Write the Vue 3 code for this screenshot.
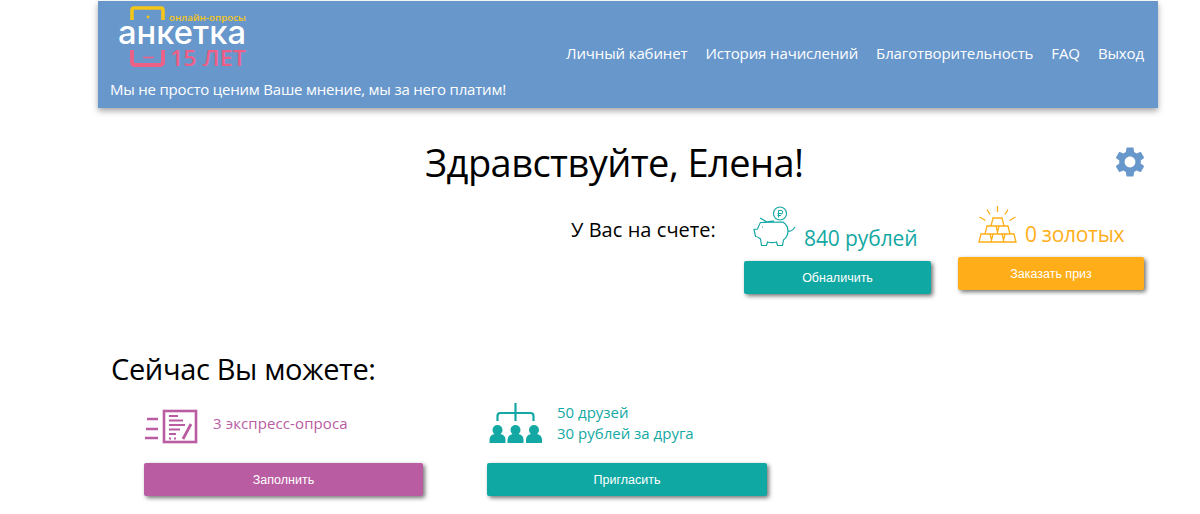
<script setup>
const navItems = ['Личный кабинет', 'История начислений', 'Благотворительность', 'FAQ', 'Выход']
</script>

<template>
  <div class="page">
    <header class="header">
      <div class="brand">
        <svg class="logo" width="140" height="72" viewBox="0 0 140 72">
          <path d="M16 20V10Q16 8 18 8H45Q47 8 47 10V20" fill="none" stroke="#f5c518" stroke-width="3.600" />
          <circle cx="32" cy="17" r="1.400" fill="#f5c518" />
          <text x="53" y="21" textLength="77" lengthAdjust="spacingAndGlyphs" class="logo-small">онлайн-опросы</text>
          <text x="2" y="44" textLength="128" lengthAdjust="spacingAndGlyphs" class="logo-main">анкетка</text>
          <path d="M16 50V62Q16 65 19 65H44Q47 65 47 62V50" fill="none" stroke="#ee5f85" stroke-width="3.800" />
          <path d="M27 57.500H38" stroke="#ee5f85" stroke-width="1.600" />
          <text x="54" y="65.500" textLength="76" lengthAdjust="spacingAndGlyphs" class="logo-years">15 ЛЕТ</text>
        </svg>
        <div class="tagline">Мы не просто ценим Ваше мнение, мы за него платим!</div>
      </div>
      <nav class="nav">
        <a v-for="item in navItems" :key="item" class="nav-link">{{ item }}</a>
      </nav>
    </header>

    <main class="main">
      <div class="title-row">
        <h1 class="title">Здравствуйте, Елена!</h1>
        <svg class="gear" width="36" height="36" viewBox="0 0 24 24">
          <path fill="#6897cc" d="M19.14,12.94c.04-.3.06-.61.06-.94 0-.32-.02-.64-.07-.94l2.03-1.58c.18-.14.23-.41.12-.61l-1.92-3.32c-.12-.22-.37-.29-.59-.22l-2.39.96c-.5-.38-1.03-.7-1.62-.94l-.36-2.54c-.04-.24-.24-.41-.48-.41h-3.84c-.24 0-.43.17-.47.41l-.36 2.54c-.59.24-1.13.57-1.62.94l-2.39-.96c-.22-.08-.47 0-.59.22L2.74 8.87c-.12.21-.08.47.12.61l2.03 1.58c-.05.3-.09.63-.09.94s.02.64.07.94l-2.03 1.58c-.18.14-.23.41-.12.61l1.92 3.32c.12.22.37.29.59.22l2.39-.96c.5.38 1.03.7 1.62.94l.36 2.54c.05.24.24.41.48.41h3.84c.24 0 .44-.17.47-.41l.36-2.54c.59-.24 1.13-.56 1.62-.94l2.39.96c.22.08.47 0 .59-.22l1.92-3.32c.12-.22.07-.47-.12-.61l-2.01-1.58zM12 15.600c-1.98 0-3.6-1.62-3.6-3.6s1.62-3.6 3.6-3.6 3.6 1.62 3.6 3.6-1.62 3.6-3.6 3.6z" />
        </svg>
      </div>

      <div class="balance-row">
        <div class="balance-label">У Вас на счете:</div>
        <div class="wallet wallet-money">
          <div class="wallet-top">
            <svg class="icon-pig" width="46" height="50" viewBox="0 0 46 50" fill="none" stroke="#13a8a3" stroke-width="1.200">
              <circle cx="30" cy="12.500" r="6.500" />
              <path d="M27.500 12.500h4M28.500 9.500v7M28.500 9.500h2.500a1.500 1.500 0 0 1 0 3.500M27.500 14.500h3.500" stroke-width="1" />
              <path d="M10 17l7 4c2-.6 4-1 7-1M33 21c3 2 5 5.500 5 9 0 4-2 7-4.500 9l-1 5.500h-5l-1-3.500c-3 .8-6 .8-9 0l-1 3.500h-5l-1-6.500c-1.500-1.500-3-2.500-5-2.500l-1.500-7 3.500-.500c1-2.500 2-5 3-6.500z" />
              <path d="M38 30c3 1 5-1 7-4" />
              <path d="M12 26h1" />
            </svg>
            <span class="amount amount-teal">840 рублей</span>
          </div>
          <button class="action action-teal wallet-btn">Обналичить</button>
        </div>
        <div class="wallet wallet-gold">
          <div class="wallet-top">
            <svg class="icon-gold" width="48" height="44" viewBox="0 0 48 44" fill="none" stroke="#ffae19" stroke-width="1.300">
              <path d="M25.500 5v6M15 8.500l3 5M36 8.500l-3 5M7.500 16l6 3.500M43.500 16l-6 3.500" />
              <path d="M21 17h9l2 8H19zM15 25h9l2 8H13zM27 25h9l2 8H25zM9 33h9l2 8H7zM21 33h9l2 8H19zM33 33h9l2 8H31z" />
            </svg>
            <span class="amount amount-gold">0 золотых</span>
          </div>
          <button class="action action-orange wallet-btn">Заказать приз</button>
        </div>
      </div>

      <h2 class="subtitle">Сейчас Вы можете:</h2>

      <div class="offers">
        <div class="offer offer-survey">
          <div class="offer-top">
            <svg class="icon-survey" width="54" height="40" viewBox="0 0 54 40" fill="none" stroke="#b95ca2">
              <rect x="19" y="5" width="32" height="31" stroke-width="2.600" />
              <path d="M2 13h11M1 23h12M0 32h13" stroke-width="2.400" />
              <path d="M24 10h9M24 14.500h14M24 19h16M24 23.500h11M24 28h7" stroke-width="1.800" />
              <path d="M24 32.500h2M29 32.500h2" stroke-width="2.200" />
              <path d="M38 33l8-15" stroke-width="2.800" />
            </svg>
            <div class="offer-text offer-text-purple">3 экспресс-опроса</div>
          </div>
          <button class="action action-purple offer-btn">Заполнить</button>
        </div>
        <div class="offer offer-friends">
          <div class="offer-top">
            <svg class="icon-friends" width="54" height="42" viewBox="0 0 54 42" fill="#13a8a3" stroke="none">
              <path d="M26.500 0v18M8.500 18v-5q0-3 3-3h30q3 0 3 3v5" fill="none" stroke="#13a8a3" stroke-width="2.200" />
              <g v-for="x in [8.5, 26.5, 45]" :key="x">
                <circle :cx="x" cy="27" r="5" />
                <path :d="`M${x - 8} 40v-3q0-5 5-6h6q5 1 5 6v3z`" />
              </g>
            </svg>
            <div class="offer-text offer-text-teal">50 друзей<br />30 рублей за друга</div>
          </div>
          <button class="action action-teal offer-btn">Пригласить</button>
        </div>
      </div>
    </main>
  </div>
</template>

<style>
html, body { margin: 0; background: #fff; }
</style>

<style scoped>
.page {
  width: 1200px;
  height: 514px;
  overflow: hidden;
  font-family: "Open Sans", "Noto Sans", sans-serif;
  color: #000;
}
.header {
  box-sizing: border-box;
  width: 1060px;
  height: 107px;
  margin: 1px 0 0 98px;
  padding-left: 12px;
  padding-right: 14px;
  background: #6897cc;
  box-shadow: 0 3px 6px rgba(0, 0, 0, 0.35);
  display: flex;
  justify-content: space-between;
  color: #fff;
}
.brand { display: flex; flex-direction: column; }
.logo { display: block; margin-left: 6px; margin-top: -1px; }
.logo-small { font: 600 9px "Open Sans", sans-serif; fill: #f5c518; }
.logo-main { font: 500 33px "Inter", sans-serif; fill: #fff; }
.logo-years { font: 600 21px "Open Sans", sans-serif; fill: #ee5f85; }
.tagline {
  margin-top: 7px;
  font-size: 15px;
  letter-spacing: -0.2px;
  line-height: 20px;
  white-space: nowrap;
}
.nav {
  display: flex;
  gap: 18px;
  margin-top: 41px;
  align-self: flex-start;
}
.nav-link {
  font-size: 15px;
  line-height: 22px;
  letter-spacing: -0.12px;
  white-space: nowrap;
}
.main { margin-left: 98px; width: 1060px; }
.title-row {
  display: flex;
  align-items: center;
  height: 50px;
  margin-top: 29px;
  padding-left: 327px;
  padding-right: 10px;
  justify-content: space-between;
}
.title {
  margin: 0;
  font-size: 38px;
  font-weight: 400;
  line-height: 50px;
  letter-spacing: -0.55px;
  white-space: nowrap;
}
.balance-row {
  display: flex;
  align-items: flex-start;
  height: 162px;
  padding-left: 473px;
}
.balance-label {
  width: 173px;
  margin-top: 30px;
  font-size: 20px;
  line-height: 26px;
  letter-spacing: 0.05px;
  white-space: nowrap;
}
.wallet { display: flex; flex-direction: column; }
.wallet-money { width: 187px; margin-top: 14px; }
.wallet-gold { width: 186px; margin-left: 27px; margin-top: 14px; }
.wallet-top { display: flex; height: 60px; }
.wallet-gold .wallet-top { height: 56px; }
.icon-pig { margin-left: 6px; flex: none; }
.icon-gold { margin-left: 14px; flex: none; }
.amount {
  font-size: 21px;
  line-height: 28px;
  white-space: nowrap;
  letter-spacing: -0.3px;
}
.amount-teal { color: #13a8a3; margin-left: 8px; margin-top: 23px; letter-spacing: -0.1px; }
.amount-gold { color: #ffae19; margin-left: 5px; margin-top: 19px; }
.action {
  display: block;
  border: none;
  border-radius: 2px;
  color: #fff;
  font-family: "Liberation Sans", Arial, sans-serif;
  font-size: 12.500px;
  padding: 0;
  box-shadow: 2px 2px 4px rgba(0, 0, 0, 0.55);
}
.wallet-btn { width: 100%; height: 33px; }
.action-teal { background: #10a8a3; }
.action-orange { background: #ffae19; }
.action-purple { background: #b95ca2; }
.subtitle {
  margin: 0 0 0 13px;
  font-size: 29px;
  font-weight: 400;
  line-height: 40px;
  letter-spacing: -0.35px;
}
.offers {
  display: flex;
  margin-left: 46px;
  margin-top: 14px;
}
.offer { width: 280px; }
.offer-survey { width: 279px; }
.offer-friends { margin-left: 64px; }
.offer-top { display: flex; height: 60px; }
.offer-survey .offer-top { padding-left: 1px; }
.offer-friends .offer-top { padding-left: 2px; }
.icon-survey { flex: none; margin-top: 3px; }
.icon-friends { flex: none; }
.offer-text {
  font-size: 15px;
  line-height: 21px;
  margin-left: 14px;
  white-space: nowrap;
}
.offer-text-purple { color: #b95ca2; margin-top: 10px; letter-spacing: 0.1px; }
.offer-text-teal { color: #13a8a3; margin-top: -1px; }
.offer-btn { width: 100%; height: 33px; }
</style>
